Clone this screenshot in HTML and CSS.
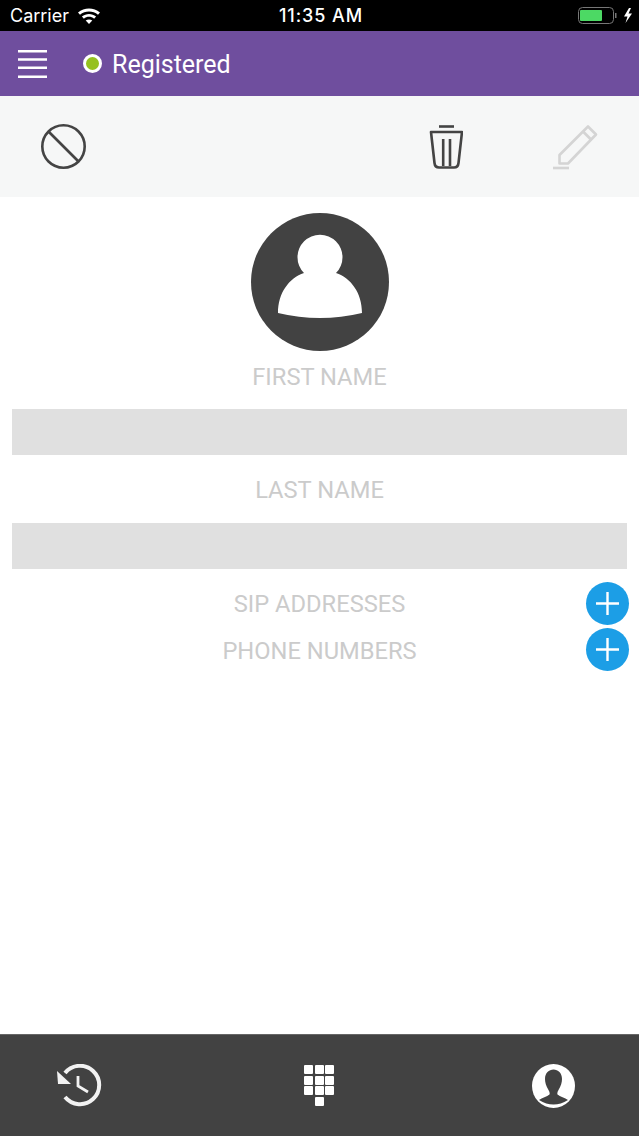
FILE: index.html
```html
<!DOCTYPE html>
<html lang="en">
<head>
    <meta charset="UTF-8">
    <meta name="viewport" content="width=device-width, initial-scale=1.0">
    <title>Contact</title>
    <link rel="stylesheet" href="styles.css">
</head>
<body>
<div class="app">

    <!-- Status bar -->
    <div class="status-bar">
        <div class="status-left">
            <span>Carrier</span>
            <svg class="wifi" width="24" height="17" viewBox="0 0 24 17">
                <path d="M1 5.6C7.2 .2 16.8 .2 23 5.6L21 7.8C15.9 3.4 8.1 3.4 3 7.8Z" fill="#fff"/>
                <path d="M4.9 9.6C9 6 15 6 19.1 9.6L17.1 11.8C14.2 9.2 9.8 9.2 6.9 11.8Z" fill="#fff"/>
                <path d="M8.7 13.6C10.6 12 13.4 12 15.3 13.6L12 17Z" fill="#fff"/>
            </svg>
        </div>
        <div class="status-time">11:35 AM</div>
        <div class="status-right">
            <svg width="55" height="17" viewBox="0 0 55 17">
                <rect x="1.5" y="0.5" width="35" height="16" rx="4" fill="none" stroke="#777"/>
                <rect x="3" y="3" width="22" height="11" rx="1" fill="#4cd964"/>
                <rect x="38" y="6" width="1.5" height="5" fill="#777"/>
                <path d="M52 1L47 9.500H50.500L48.500 16L55 6.500H51.500L54 1Z" fill="#fff"/>
            </svg>
        </div>
    </div>

    <!-- Purple header -->
    <header class="top-bar">
        <svg class="menu-icon" width="30" height="28" viewBox="0 0 30 28">
            <path d="M0 1.200H29M0 9.500H29M0 17.800H29M0 26.800H29" stroke="#fff" stroke-width="2.400" fill="none"/>
        </svg>
        <span class="status-dot"></span>
        <span class="status-text">Registered</span>
    </header>

    <!-- Toolbar -->
    <div class="toolbar">
        <svg width="46" height="46" viewBox="0 0 46 46">
            <circle cx="22.500" cy="22.500" r="21.200" fill="none" stroke="#444" stroke-width="2.600"/>
            <path d="M7.500 7.500L37.500 37.500" stroke="#444" stroke-width="2.600"/>
        </svg>
        <svg class="trash" width="34" height="44" viewBox="0 0 34 44">
            <path d="M10 1.500H25" stroke="#444" stroke-width="2.600" fill="none"/>
            <path d="M2 7H33L29.500 38C29.200 41 27.500 42.500 25 42.500H10C7.500 42.500 5.800 41 5.500 38Z" fill="none" stroke="#444" stroke-width="2.600" stroke-linejoin="round"/>
            <path d="M14.200 14V41M21 14V41" stroke="#444" stroke-width="2.600" fill="none"/>
        </svg>
        <svg class="pencil" width="46" height="46" viewBox="0 0 46 46">
            <path d="M7.500 39.500V31L36 2.500L44 10.500L16 39.500Z" fill="none" stroke="#d4d4d4" stroke-width="2.600" stroke-linejoin="round"/>
            <path d="M31 7.500L39.500 16" stroke="#d4d4d4" stroke-width="2.600"/>
            <path d="M1 44H17" stroke="#d4d4d4" stroke-width="2.600"/>
        </svg>
    </div>

    <!-- Contact form -->
    <main class="content">
        <div class="avatar">
            <svg width="138" height="138" viewBox="0 0 138 138">
                <circle cx="69" cy="69" r="69" fill="#424242"/>
                <path d="M53 60A22.500 22.500 0 1 1 85 60C100 65 111 80 111 100Q69 110 27 100C27 80 38 65 53 60Z" fill="#fff"/>
            </svg>
        </div>

        <div class="field-label first">FIRST NAME</div>
        <div class="field-input"></div>

        <div class="field-label">LAST NAME</div>
        <div class="field-input"></div>

        <div class="add-rows">
            <div class="add-row">
                <span class="add-label">SIP ADDRESSES</span>
                <button class="add-btn">
                    <svg width="25" height="25" viewBox="0 0 25 25"><path d="M12.500 1V24M1 12.500H24" stroke="#fff" stroke-width="2.400"/></svg>
                </button>
            </div>
            <div class="add-row">
                <span class="add-label">PHONE NUMBERS</span>
                <button class="add-btn">
                    <svg width="25" height="25" viewBox="0 0 25 25"><path d="M12.500 1V24M1 12.500H24" stroke="#fff" stroke-width="2.400"/></svg>
                </button>
            </div>
        </div>
    </main>

    <!-- Bottom tabs -->
    <nav class="tab-bar">
        <svg class="tab-history" width="46" height="44" viewBox="0 0 46 44">
            <path d="M8 9A19.200 19.200 0 1 1 8 33" fill="none" stroke="#f2f2f2" stroke-width="4"/>
            <path d="M0 7L1 20H14Z" fill="#f2f2f2"/>
            <path d="M21 12V22L31 28" fill="none" stroke="#f2f2f2" stroke-width="2.800"/>
        </svg>
        <div class="keypad">
            <span></span><span></span><span></span>
            <span></span><span></span><span></span>
            <span></span><span></span><span></span>
            <span class="key-zero"></span>
        </div>
        <svg class="tab-contact" width="44" height="44" viewBox="0 0 44 44">
            <ellipse cx="21.500" cy="22" rx="21.500" ry="22" fill="#fff"/>
            <path d="M7 36C10 33.500 15 33 17.500 30.500C18 29 17.500 27.500 16.500 26C14 22 13 18 13 15C13 9 17 5.500 21.500 5.500C26 5.500 30 9 30 15C30 18 29 22 26.500 26C25.500 27.500 25 29 25.500 30.500C28 33 33 33.500 36 36Q21.500 45 7 36Z" fill="#424242"/>
        </svg>
    </nav>
</div>
</body>
</html>
```

FILE: styles.css
```css
/* Global */
body {
    margin: 0;
    font-family: Roboto, sans-serif;
    background-color: #fff;
}

.app {
    height: 1136px;
    display: flex;
    flex-direction: column;
    overflow: hidden;
}

/* Status bar */
.status-bar {
    height: 31px;
    background-color: #000;
    color: #fff;
    display: grid;
    grid-template-columns: 1fr auto 1fr;
    align-items: center;
    padding: 0 7px 0 10px;
    font-family: Inter, sans-serif;
    font-size: 18px;
}

.status-left {
    display: flex;
    align-items: center;
    gap: 8px;
}

.status-time {
    font-weight: 500;
    letter-spacing: 0.9px;
}

.status-right {
    display: flex;
    justify-content: flex-end;
}

/* Header */
.top-bar {
    height: 65px;
    background-color: #6f4e9e;
    display: flex;
    align-items: center;
    padding-left: 18px;
    color: #fff;
}

.status-dot {
    width: 13px;
    height: 13px;
    margin-left: 35px;
    background-color: #95c11f;
    border: 3px solid #fff;
    border-radius: 50%;
}

.status-text {
    margin: 2px 0 0 10px;
    font-size: 25px;
}

/* Toolbar */
.toolbar {
    height: 101px;
    background-color: #f6f7f7;
    display: flex;
    align-items: center;
    padding-left: 41px;
}

.trash {
    margin-left: 342px;
}

.pencil {
    margin-left: 89px;
}

/* Form */
.content {
    flex: 1;
    padding: 16px 12px 0;
}

.avatar {
    display: flex;
    justify-content: center;
    height: 138px;
}

.field-label {
    height: 46px;
    margin: 11px 0;
    padding-top: 1px;
    box-sizing: border-box;
    display: flex;
    align-items: center;
    justify-content: center;
    font-size: 23.7px;
    color: #cbcbcb;
}

.field-label.first {
    margin-top: 1px;
    padding-top: 3px;
}

.field-input {
    height: 46px;
    background-color: #e0e0e0;
}

.add-rows {
    margin: 11px -2px 0;
    display: flex;
    flex-direction: column;
}

.add-row {
    height: 46.5px;
    display: grid;
    grid-template-columns: 1fr auto 1fr;
    align-items: center;
}

.add-label {
    grid-column: 2;
    margin-top: 2px;
    font-size: 23.7px;
    color: #cbcbcb;
}

.add-btn {
    grid-column: 3;
    justify-self: end;
    width: 43px;
    height: 43px;
    padding: 0;
    border: none;
    border-radius: 50%;
    background-color: #1c9ee6;
    display: flex;
    align-items: center;
    justify-content: center;
}

/* Bottom tabs */
.tab-bar {
    height: 102px;
    background-color: #424242;
    border-top: 1px solid #666;
    box-sizing: border-box;
    display: flex;
    align-items: center;
    padding-left: 57px;
}

.keypad {
    margin-left: 201px;
    display: grid;
    grid-template-columns: repeat(3, 9px);
    gap: 1.7px;
}

.keypad span {
    height: 9px;
    background-color: #fff;
    border-radius: 1px;
}

.keypad .key-zero {
    grid-column: 2;
}

.tab-contact {
    margin-left: 197.5px;
}
```
